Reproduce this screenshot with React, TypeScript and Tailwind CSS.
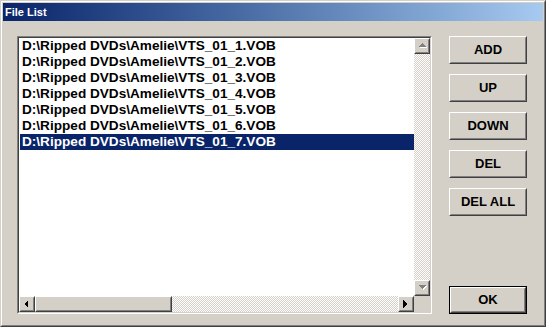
import React from "react";

const FILES = [
  "D:\\Ripped DVDs\\Amelie\\VTS_01_1.VOB",
  "D:\\Ripped DVDs\\Amelie\\VTS_01_2.VOB",
  "D:\\Ripped DVDs\\Amelie\\VTS_01_3.VOB",
  "D:\\Ripped DVDs\\Amelie\\VTS_01_4.VOB",
  "D:\\Ripped DVDs\\Amelie\\VTS_01_5.VOB",
  "D:\\Ripped DVDs\\Amelie\\VTS_01_6.VOB",
  "D:\\Ripped DVDs\\Amelie\\VTS_01_7.VOB",
];

const SELECTED = 6;

// classic 3d raised edge, two nested borders
const Raised = ({
  className = "",
  children,
}: {
  className?: string;
  children?: React.ReactNode;
}) => (
  <div
    className={`border border-t-white border-l-white border-r-[#404040] border-b-[#404040] ${className}`}
  >
    <div className="flex h-full w-full items-center justify-center border border-t-[#d4d0c8] border-l-[#d4d0c8] border-r-[#808080] border-b-[#808080] bg-[#d4d0c8]">
      {children}
    </div>
  </div>
);

const Arrow = ({
  dir,
  disabled,
}: {
  dir: "up" | "down" | "left" | "right";
  disabled?: boolean;
}) => {
  const pts = {
    up: "4,1 8,5 0,5",
    down: "0,1 8,1 4,5",
    left: "5,0 5,8 1,4",
    right: "1,0 1,8 5,4",
  }[dir];
  return (
    <svg width="9" height="9" viewBox="0 0 9 9" shapeRendering="crispEdges">
      {disabled && <polygon points={pts} fill="#ffffff" transform="translate(1,1)" />}
      <polygon points={pts} fill={disabled ? "#808080" : "#000000"} />
    </svg>
  );
};

const ScrollButton = (props: { dir: "up" | "down" | "left" | "right"; disabled?: boolean }) => (
  <Raised className="size-4 shrink-0">
    <Arrow {...props} />
  </Raised>
);

const checker =
  "bg-[repeating-conic-gradient(#d4d0c8_0%_25%,#ffffff_0%_50%)] bg-[length:2px_2px]";

const DialogButton = ({ label, isDefault }: { label: string; isDefault?: boolean }) => {
  const inner = (
    <Raised className="h-full w-full">
      <span className="text-[13px] font-bold text-black">{label}</span>
    </Raised>
  );
  if (isDefault) {
    return <div className="h-7 w-[78px] border border-black">{inner}</div>;
  }
  return <div className="h-7 w-[78px]">{inner}</div>;
};

export default function App() {
  return (
    <div
      className="h-[327px] w-[546px] border border-t-[#d4d0c8] border-l-[#d4d0c8] border-r-[#404040] border-b-[#404040] bg-[#d4d0c8]"
      style={{ fontFamily: '"Liberation Sans", Arial, sans-serif' }}
    >
      <div className="flex h-full flex-col border border-t-white border-l-white border-r-[#808080] border-b-[#808080] p-px">
        {/* title bar */}
        <div className="flex h-[18px] shrink-0 items-center bg-gradient-to-r from-[#0a246a] to-[#a6caf0] pl-[2px]">
          <span className="text-[11px] font-bold text-white">File List</span>
        </div>

        <div className="flex gap-[17px] pl-[14px] pt-[15px]">
          {/* list box */}
          <div className="h-[278px] w-[415px] border border-t-[#808080] border-l-[#808080] border-r-white border-b-white">
            <div className="flex h-full flex-col border border-t-[#404040] border-l-[#404040] border-r-[#d4d0c8] border-b-[#d4d0c8] bg-white">
              <div className="flex min-h-0 flex-1">
                <div className="flex-1">
                  {FILES.map((f, i) => (
                    <div
                      key={f}
                      className={`ml-px h-4 whitespace-pre pl-[2px] text-[13.6px] font-bold leading-4 ${
                        i === SELECTED ? "bg-[#0a246a] text-white" : "text-black"
                      }`}
                    >
                      {f}
                    </div>
                  ))}
                </div>
                <div className="flex w-4 flex-col">
                  <ScrollButton dir="up" disabled />
                  <div className={`flex-1 ${checker}`} />
                  <ScrollButton dir="down" disabled />
                </div>
              </div>
              <div className="flex h-4 shrink-0">
                <ScrollButton dir="left" />
                <Raised className="h-4 w-[137px] shrink-0" />
                <div className={`flex-1 ${checker}`} />
                <ScrollButton dir="right" />
                <div className="size-4 shrink-0 bg-[#d4d0c8]" />
              </div>
            </div>
          </div>

          {/* buttons */}
          <div className="flex h-[278px] flex-col">
            <div className="flex flex-col gap-[10px]">
              <DialogButton label="ADD" />
              <DialogButton label="UP" />
              <DialogButton label="DOWN" />
              <DialogButton label="DEL" />
              <DialogButton label="DEL ALL" />
            </div>
            <div className="mt-auto">
              <DialogButton label="OK" isDefault />
            </div>
          </div>
        </div>
      </div>
    </div>
  );
}
